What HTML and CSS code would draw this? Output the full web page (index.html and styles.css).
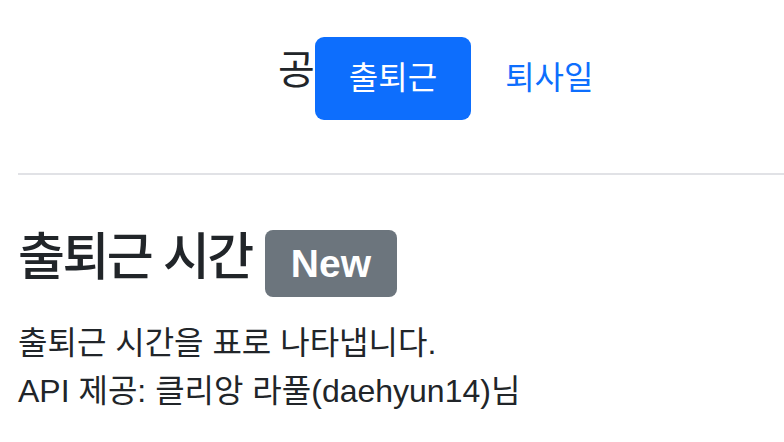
FILE: index.html
```html
<!DOCTYPE html>
<html lang="ko">
<head>
<meta charset="utf-8">
<title>출퇴근 시간</title>
<link rel="stylesheet" href="styles.css">
</head>
<body>
<div class="page">
  <header class="nav">
    <span class="brand">공</span>
    <a class="nav-link active" href="#">출퇴근</a>
    <a class="nav-link" href="#">퇴사일</a>
  </header>
  <hr class="divider">
  <h1 class="title"><span class="title-text">출퇴근 시간</span><span class="badge">New</span></h1>
  <p class="desc">출퇴근 시간을 표로 나타냅니다.<br>API 제공: 클리앙 라풀(daehyun14)님</p>
</div>
</body>
</html>
```

FILE: styles.css
```css
html, body {
  margin: 0;
  padding: 0;
  background: #ffffff;
  overflow: hidden;
}
.page {
  font-family: "Liberation Sans", "Noto Sans CJK KR", sans-serif;
  color: #212529;
  padding: 37px 0 0 18px;
}
.nav {
  display: flex;
  align-items: center;
  padding-left: 260px;
}
.brand {
  font-size: 40px;
  line-height: 1;
  margin-bottom: 18px;
  color: #212529;
}
.nav-link {
  font-size: 32px;
  line-height: 48px;
  padding: 17px 34px 18px;
  color: #0d6efd;
  text-decoration: none;
  border-radius: 9px;
}
.nav-link.active {
  background: #0d6efd;
  color: #ffffff;
}
.divider {
  margin: 53px 0 0 0;
  border: 0;
  border-top: 2px solid #e1e2e6;
  height: 0;
}
.title {
  margin: 52px 0 0 0;
  font-size: 51px;
  font-weight: 500;
  line-height: 1.2;
  display: flex;
  align-items: center;
  gap: 13px;
}
.title-text {
  letter-spacing: -2.5px;
  margin-bottom: 11px;
}
.badge {
  font-family: "Liberation Sans", sans-serif;
  font-size: 39px;
  font-weight: 700;
  line-height: 1;
  color: #ffffff;
  background: #6c757d;
  padding: 14px 26px;
  border-radius: 8px;
}
.desc {
  margin: 20px 0 0 0;
  font-size: 32px;
  line-height: 48px;
}
```
